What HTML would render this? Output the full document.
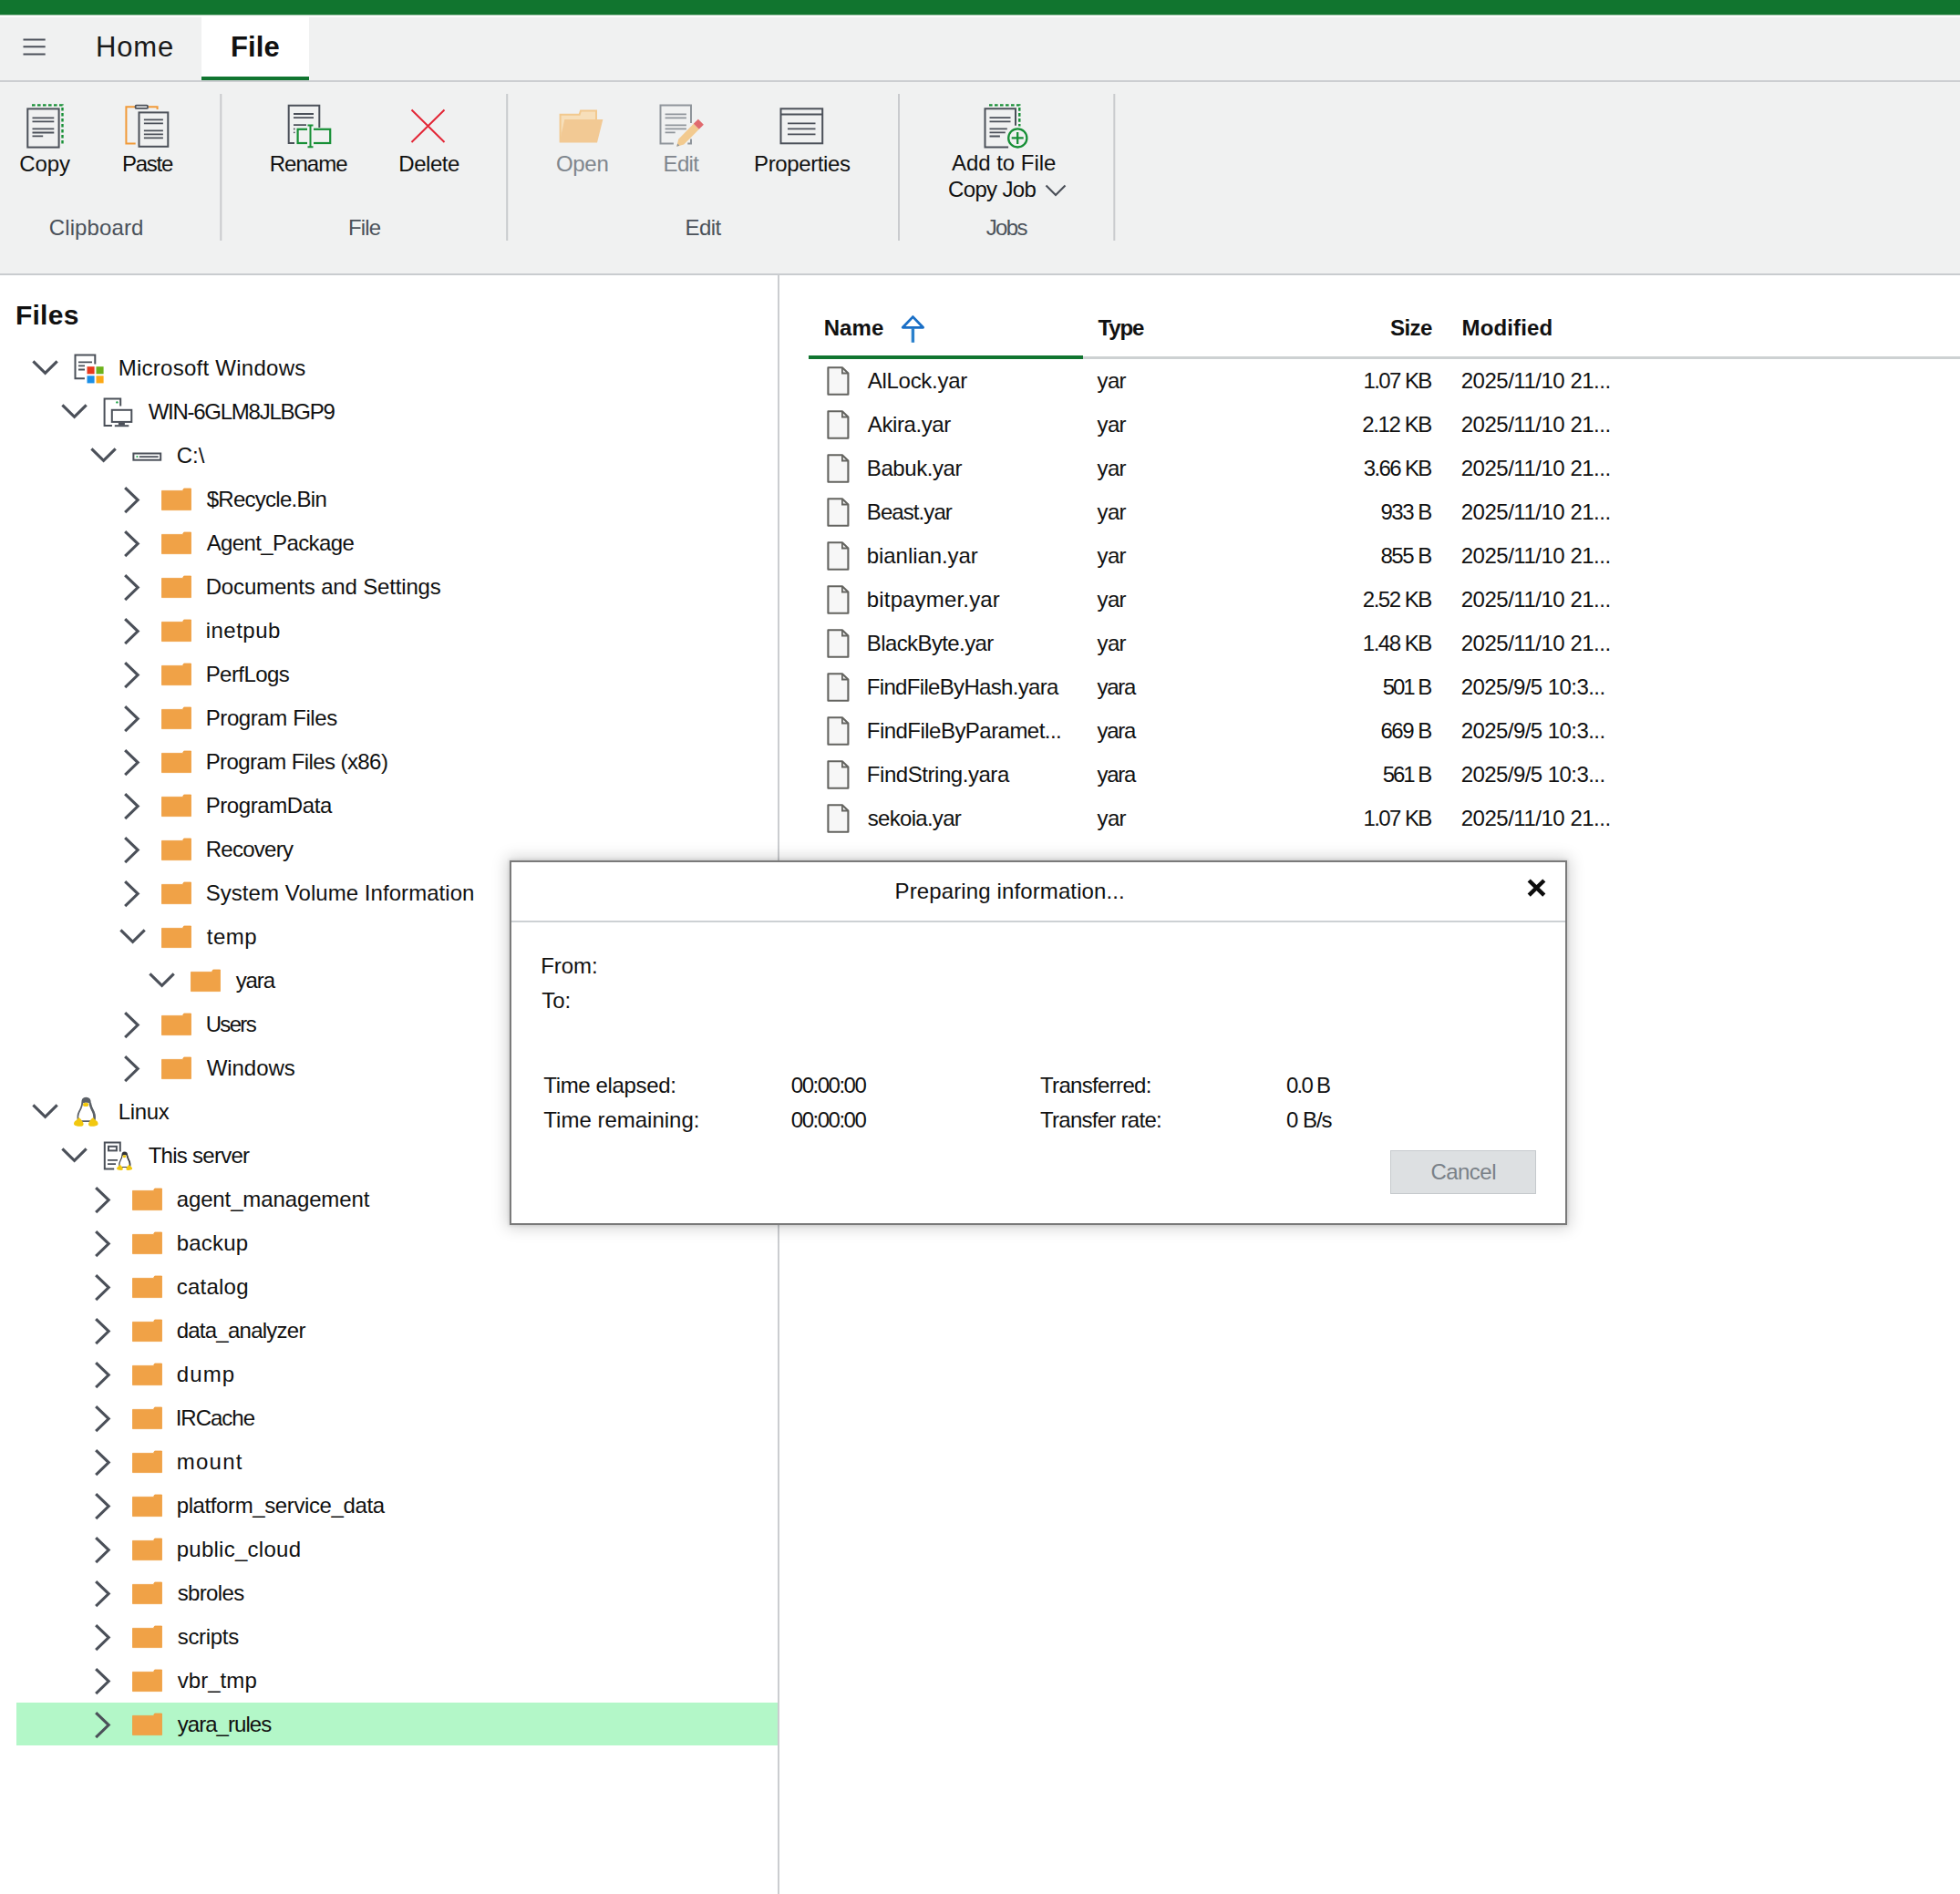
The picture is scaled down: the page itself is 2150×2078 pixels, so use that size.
<!DOCTYPE html>
<html><head><meta charset="utf-8"><style>
html,body{margin:0;padding:0;}
body{width:2150px;height:2078px;position:relative;overflow:hidden;background:#fff;font-family:"Liberation Sans", sans-serif;}
.r{position:absolute;}
.t{position:absolute;white-space:nowrap;}
svg{position:absolute;left:0;top:0;}
</style></head><body>
<div class="r" style="left:0;top:0;width:2150px;height:16px;background:#11752f"></div>
<div class="r" style="left:0;top:16px;width:2150px;height:1px;background:#9cc4a6"></div>
<div class="r" style="left:0;top:17px;width:2150px;height:1.5px;background:#fdfcfd"></div>
<div class="r" style="left:0;top:18.5px;width:2150px;height:69.5px;background:#f0f1f1"></div>
<div class="r" style="left:221px;top:17px;width:118px;height:67px;background:#fff"></div>
<div class="r" style="left:221px;top:84px;width:118px;height:4px;background:#117530"></div>
<div class="r" style="left:0;top:88px;width:2150px;height:2px;background:#ccced1"></div>
<div class="r" style="left:0;top:90px;width:2150px;height:210px;background:#f0f1f1"></div>
<div class="r" style="left:0;top:300px;width:2150px;height:2px;background:#c9cccf"></div>
<div class="r" style="left:853px;top:302px;width:2px;height:1776px;background:#cbcdd0"></div>
<div class="r" style="left:18px;top:1868px;width:835px;height:47px;background:#b3f7c8"></div>
<div class="r" style="left:887px;top:390.5px;width:1263px;height:3.5px;background:#cdd1d2"></div>
<div class="r" style="left:887px;top:390px;width:301px;height:4px;background:#117530"></div>
<svg width="2150" height="2078" viewBox="0 0 2150 2078">
<rect x="30.3" y="119.4" width="34.3" height="42.2" fill="none" stroke="#4b5059" stroke-width="2"/><path d="M35 115.4 H68.5 V159" fill="none" stroke="#178f36" stroke-width="2.4" stroke-dasharray="3.6 2.4"/><path d="M35.5 129.3 H59.3 M35.5 133.4 H59.3 M35.5 141.4 H59.3 M35.5 145.5 H59.3 M35.5 149.4 H47.2" stroke="#4b5059" stroke-width="1.8"/><path d="M148.7 117.3 H138.4 V157.4 H148.7" fill="none" stroke="#f19a38" stroke-width="2"/><path d="M162.6 117.3 H172.6 V120" fill="none" stroke="#f19a38" stroke-width="2"/><rect x="148.6" y="115.7" width="13.4" height="3.2" rx="1" fill="none" stroke="#4b5059" stroke-width="1.8"/><rect x="152.5" y="123.4" width="31.8" height="37.4" fill="none" stroke="#4b5059" stroke-width="2"/><path d="M157.9 131.3 H178.9 M157.9 135.4 H178.9 M157.9 143.3 H178.9 M157.9 147.4 H178.9 M157.9 151.4 H178.9" stroke="#4b5059" stroke-width="1.8"/><path d="M323 157 H316.7 V115.7 H350.3 V140" fill="none" stroke="#4b5059" stroke-width="2"/><path d="M322 125 H344 M322 129.2 H344 M322 137.2 H336" stroke="#4b5059" stroke-width="1.8"/><circle cx="322.8" cy="141.5" r="0.9" fill="#4b5059"/><circle cx="322.8" cy="145.3" r="0.9" fill="#4b5059"/><rect x="326.6" y="141.8" width="35.6" height="15.2" fill="#f0f1f1" stroke="#178f36" stroke-width="2.2"/><rect x="337" y="139" width="7" height="20" fill="#f0f1f1"/><path d="M340.5 137.5 V161.5 M337.5 137.5 H343.5 M337.5 161.2 H343.5" stroke="#178f36" stroke-width="2"/><path d="M451.5 120.5 L487.5 156 M487.5 120.5 L451.5 156" stroke="#e32636" stroke-width="2"/><path d="M614.6 155.5 V125.8 H635.6 L637 121.5 H654 V131" fill="#f7dfba" stroke="#f2c98f" stroke-width="2"/><path d="M613.6 156.5 L619.3 130.9 H661.4 L655 156.5 Z" fill="#f2c994"/><path d="M738.9 157.5 H724.5 V115.5 H758 V135.1 M758 152.6 V157.5 H754.3" fill="none" stroke="#8f959b" stroke-width="2"/><path d="M729.6 125.3 H752.9 M729.6 129.4 H752.9 M729.6 137.3 H752.9 M729.6 141.4 H752.9 M729.6 145.3 H740.7" stroke="#8f959b" stroke-width="1.8"/><path d="M742.3 160.7 L744.2 152.7 L760.8 135.8 L766.8 141.8 L750.2 158.6 Z" fill="#f2ca8f"/><path d="M760.8 135.8 L765.9 130.7 L771.9 136.7 L766.8 141.8 Z" fill="#e06a6e"/><path d="M742.3 160.7 L743.2 157.6 L745.4 159.8 Z" fill="#8f959b"/><rect x="856.5" y="119.3" width="45.7" height="38" fill="none" stroke="#4b5059" stroke-width="2"/><path d="M856.5 125.5 H902.2" stroke="#4b5059" stroke-width="1.9"/><path d="M864 135.4 H894.5 M864 141.3 H894.5 M864 147.3 H894.5" stroke="#4b5059" stroke-width="1.8"/><path d="M1106.1 161.4 H1080.5 V119.2 H1114 V137.8" fill="none" stroke="#4b5059" stroke-width="2"/><path d="M1085 115.4 H1118.3 V138.5" fill="none" stroke="#178f36" stroke-width="2.4" stroke-dasharray="3.6 2.4"/><path d="M1085.5 129.2 H1108.5 M1085.5 133.3 H1108.5 M1085.5 141.3 H1104.8 M1085.5 145.4 H1102.8 M1085.5 149.5 H1096.9" stroke="#4b5059" stroke-width="1.8"/><circle cx="1116.3" cy="151.4" r="10.1" fill="#f0f1f1" stroke="#178f36" stroke-width="2.3"/><path d="M1116.2 145 V158 M1109.7 151.4 H1122.7" stroke="#178f36" stroke-width="2.3"/><polyline points="1147.5,203.5 1158,214 1168.5,203.5" fill="none" stroke="#4b5059" stroke-width="2.2"/><path d="M25.5 43.4 H49.7 M25.5 51.3 H49.7 M25.5 59.4 H49.7" stroke="#4b505a" stroke-width="2"/><rect x="241.3" y="103" width="2" height="161" fill="#c9cbce"/><rect x="555.2" y="103" width="2" height="161" fill="#c9cbce"/><rect x="985" y="103" width="2" height="161" fill="#c9cbce"/><rect x="1221.3" y="103" width="2" height="161" fill="#c9cbce"/><path d="M1001.4 347.6 L990.2 359.3 H1012.6 Z" fill="none" stroke="#1a6fc6" stroke-width="2.8" stroke-linejoin="round"/><path d="M1001.4 360 V375.8" stroke="#2a80cc" stroke-width="3.4"/>
<polyline points="36.4,396.4 49.6,409.4 62.7,396.4" fill="none" stroke="#4b5059" stroke-width="3.1"/><g transform="translate(0,0.0)"><path d="M92.9 415.2 H82.5 V389.4 H104.3 V399.6" fill="none" stroke="#4b5059" stroke-width="2"/><path d="M86 397.4 H101 M86 401.4 H93 M86 405.5 H93" stroke="#4b5059" stroke-width="1.8"/><rect x="95.5" y="402.2" width="8.1" height="8.1" fill="#e8391d"/><rect x="105.5" y="402.2" width="8.1" height="8.1" fill="#6db21b"/><rect x="95.5" y="412.3" width="8.1" height="8.1" fill="#1b8fe7"/><rect x="105.5" y="412.3" width="8.1" height="8.1" fill="#fca815"/></g><polyline points="68.4,444.4 81.6,457.4 94.7,444.4" fill="none" stroke="#4b5059" stroke-width="3.1"/><g transform="translate(0,0.0)"><path d="M122.9 467 H114.6 V437.6 H132.2 V445.4" fill="none" stroke="#4b5059" stroke-width="2"/><circle cx="128.4" cy="441.4" r="1.2" fill="#1ea446"/><rect x="122.8" y="449.8" width="21.5" height="13.1" fill="none" stroke="#4b5059" stroke-width="2"/><rect x="129.9" y="463.5" width="7" height="3" fill="#4b5059"/><path d="M125.8 467.2 H141.3" stroke="#4b5059" stroke-width="2"/></g><polyline points="100.4,492.4 113.6,505.4 126.7,492.4" fill="none" stroke="#4b5059" stroke-width="3.1"/><g transform="translate(0,0.0)"><rect x="146.4" y="497.5" width="29.8" height="7.2" fill="none" stroke="#4b5059" stroke-width="2"/><circle cx="150.4" cy="501.1" r="1" fill="#1ea446"/><path d="M153.5 501.1 H173" stroke="#4b5059" stroke-width="1.8" stroke-linecap="round"/></g><polyline points="137.2,535.1 151.2,548.6 137.2,562.1" fill="none" stroke="#4b5059" stroke-width="3.1"/><path d="M177.5 538.4 H200.3 L201.7 536.0 H209.5 V559.6 H177.5 Z" fill="#f0a247" stroke="#ef9d3e" stroke-width="0.8"/><polyline points="137.2,583.1 151.2,596.6 137.2,610.1" fill="none" stroke="#4b5059" stroke-width="3.1"/><path d="M177.5 586.4 H200.3 L201.7 584.0 H209.5 V607.6 H177.5 Z" fill="#f0a247" stroke="#ef9d3e" stroke-width="0.8"/><polyline points="137.2,631.1 151.2,644.6 137.2,658.1" fill="none" stroke="#4b5059" stroke-width="3.1"/><path d="M177.5 634.4 H200.3 L201.7 632.0 H209.5 V655.6 H177.5 Z" fill="#f0a247" stroke="#ef9d3e" stroke-width="0.8"/><polyline points="137.2,679.1 151.2,692.6 137.2,706.1" fill="none" stroke="#4b5059" stroke-width="3.1"/><path d="M177.5 682.4 H200.3 L201.7 680.0 H209.5 V703.6 H177.5 Z" fill="#f0a247" stroke="#ef9d3e" stroke-width="0.8"/><polyline points="137.2,727.1 151.2,740.6 137.2,754.1" fill="none" stroke="#4b5059" stroke-width="3.1"/><path d="M177.5 730.4 H200.3 L201.7 728.0 H209.5 V751.6 H177.5 Z" fill="#f0a247" stroke="#ef9d3e" stroke-width="0.8"/><polyline points="137.2,775.1 151.2,788.6 137.2,802.1" fill="none" stroke="#4b5059" stroke-width="3.1"/><path d="M177.5 778.4 H200.3 L201.7 776.0 H209.5 V799.6 H177.5 Z" fill="#f0a247" stroke="#ef9d3e" stroke-width="0.8"/><polyline points="137.2,823.1 151.2,836.6 137.2,850.1" fill="none" stroke="#4b5059" stroke-width="3.1"/><path d="M177.5 826.4 H200.3 L201.7 824.0 H209.5 V847.6 H177.5 Z" fill="#f0a247" stroke="#ef9d3e" stroke-width="0.8"/><polyline points="137.2,871.1 151.2,884.6 137.2,898.1" fill="none" stroke="#4b5059" stroke-width="3.1"/><path d="M177.5 874.4 H200.3 L201.7 872.0 H209.5 V895.6 H177.5 Z" fill="#f0a247" stroke="#ef9d3e" stroke-width="0.8"/><polyline points="137.2,919.1 151.2,932.6 137.2,946.1" fill="none" stroke="#4b5059" stroke-width="3.1"/><path d="M177.5 922.4 H200.3 L201.7 920.0 H209.5 V943.6 H177.5 Z" fill="#f0a247" stroke="#ef9d3e" stroke-width="0.8"/><polyline points="137.2,967.1 151.2,980.6 137.2,994.1" fill="none" stroke="#4b5059" stroke-width="3.1"/><path d="M177.5 970.4 H200.3 L201.7 968.0 H209.5 V991.6 H177.5 Z" fill="#f0a247" stroke="#ef9d3e" stroke-width="0.8"/><polyline points="132.4,1020.4 145.6,1033.4 158.7,1020.4" fill="none" stroke="#4b5059" stroke-width="3.1"/><path d="M177.5 1018.4 H200.3 L201.7 1016.0 H209.5 V1039.6 H177.5 Z" fill="#f0a247" stroke="#ef9d3e" stroke-width="0.8"/><polyline points="164.4,1068.4 177.6,1081.4 190.7,1068.4" fill="none" stroke="#4b5059" stroke-width="3.1"/><path d="M209.5 1066.4 H232.3 L233.7 1064.0 H241.5 V1087.6 H209.5 Z" fill="#f0a247" stroke="#ef9d3e" stroke-width="0.8"/><polyline points="137.2,1111.1 151.2,1124.6 137.2,1138.1" fill="none" stroke="#4b5059" stroke-width="3.1"/><path d="M177.5 1114.4 H200.3 L201.7 1112.0 H209.5 V1135.6 H177.5 Z" fill="#f0a247" stroke="#ef9d3e" stroke-width="0.8"/><polyline points="137.2,1159.1 151.2,1172.6 137.2,1186.1" fill="none" stroke="#4b5059" stroke-width="3.1"/><path d="M177.5 1162.4 H200.3 L201.7 1160.0 H209.5 V1183.6 H177.5 Z" fill="#f0a247" stroke="#ef9d3e" stroke-width="0.8"/><polyline points="36.4,1212.4 49.6,1225.4 62.7,1212.4" fill="none" stroke="#4b5059" stroke-width="3.1"/><g transform="translate(80.7,1203.7) scale(1.0)"><path d="M13.6 0.9 C10.6 0.9 9.5 3.2 9.5 6.2 C9.5 9.2 8.2 12.2 6.2 16 C4.6 19 4.2 22 5.2 26.5 L22.4 26.5 C23.4 22 23 19 21.6 16 C19.6 12.2 18.2 9.2 18.2 6.2 C18.2 3.2 16.6 0.9 13.6 0.9 Z" fill="#fff" stroke="#5b6067" stroke-width="1.8"/><path d="M18.2 6.5 C18.2 9.5 19.8 12.5 21.6 16 C23 19 23.4 22 22.4 26.5" fill="none" stroke="#5b6067" stroke-width="2.6"/><path d="M9.5 7 C9.5 2.8 11 0.9 13.6 0.9 C16.2 0.9 18.2 2.8 18.2 7 C16.4 5.6 11.4 5.6 9.5 7 Z" fill="#5b6067"/><ellipse cx="13.4" cy="8.2" rx="3.1" ry="2.2" fill="#f2c80f"/><path d="M5.6 22.4 C7.6 23.6 10.4 26.8 10.9 29.2 C11.2 31.2 9.4 32 7 32 C4 32 1.4 31.4 0.6 30.2 C0 29.2 0.4 27.4 1.6 26.4 C3 25.2 4.8 24.4 5.6 22.4 Z" fill="#f2c80f"/><path d="M21.6 22.4 C19.6 23.6 16.8 26.8 16.3 29.2 C16 31.2 17.8 32 20.2 32 C23.2 32 25.8 31.4 26.6 30.2 C27.2 29.2 26.8 27.4 25.6 26.4 C24.2 25.2 22.4 24.4 21.6 22.4 Z" fill="#f2c80f"/></g><polyline points="68.4,1260.4 81.6,1273.4 94.7,1260.4" fill="none" stroke="#4b5059" stroke-width="3.1"/><g transform="translate(0,0.0)"><path d="M125.2 1282.4 H114.8 V1253.5 H131.8 V1263.6" fill="none" stroke="#4b5059" stroke-width="2"/><rect x="119" y="1257.8" width="8.9" height="4.6" fill="none" stroke="#4b5059" stroke-width="2"/><path d="M118 1272.9 H129 M118 1277.1 H127" stroke="#4b5059" stroke-width="1.8"/><g transform="translate(127.9,1263.5) scale(0.64)"><path d="M13.6 0.9 C10.6 0.9 9.5 3.2 9.5 6.2 C9.5 9.2 8.2 12.2 6.2 16 C4.6 19 4.2 22 5.2 26.5 L22.4 26.5 C23.4 22 23 19 21.6 16 C19.6 12.2 18.2 9.2 18.2 6.2 C18.2 3.2 16.6 0.9 13.6 0.9 Z" fill="#fff" stroke="#3a3d42" stroke-width="1.8"/><path d="M18.2 6.5 C18.2 9.5 19.8 12.5 21.6 16 C23 19 23.4 22 22.4 26.5" fill="none" stroke="#3a3d42" stroke-width="2.6"/><path d="M9.5 7 C9.5 2.8 11 0.9 13.6 0.9 C16.2 0.9 18.2 2.8 18.2 7 C16.4 5.6 11.4 5.6 9.5 7 Z" fill="#2e3136"/><ellipse cx="13.4" cy="8.2" rx="3.1" ry="2.2" fill="#f2c80f"/><path d="M5.6 22.4 C7.6 23.6 10.4 26.8 10.9 29.2 C11.2 31.2 9.4 32 7 32 C4 32 1.4 31.4 0.6 30.2 C0 29.2 0.4 27.4 1.6 26.4 C3 25.2 4.8 24.4 5.6 22.4 Z" fill="#f2c80f"/><path d="M21.6 22.4 C19.6 23.6 16.8 26.8 16.3 29.2 C16 31.2 17.8 32 20.2 32 C23.2 32 25.8 31.4 26.6 30.2 C27.2 29.2 26.8 27.4 25.6 26.4 C24.2 25.2 22.4 24.4 21.6 22.4 Z" fill="#f2c80f"/></g></g><polyline points="105.2,1303.1 119.2,1316.6 105.2,1330.1" fill="none" stroke="#4b5059" stroke-width="3.1"/><path d="M145.5 1306.4 H168.3 L169.7 1304.0 H177.5 V1327.6 H145.5 Z" fill="#f0a247" stroke="#ef9d3e" stroke-width="0.8"/><polyline points="105.2,1351.1 119.2,1364.6 105.2,1378.1" fill="none" stroke="#4b5059" stroke-width="3.1"/><path d="M145.5 1354.4 H168.3 L169.7 1352.0 H177.5 V1375.6 H145.5 Z" fill="#f0a247" stroke="#ef9d3e" stroke-width="0.8"/><polyline points="105.2,1399.1 119.2,1412.6 105.2,1426.1" fill="none" stroke="#4b5059" stroke-width="3.1"/><path d="M145.5 1402.4 H168.3 L169.7 1400.0 H177.5 V1423.6 H145.5 Z" fill="#f0a247" stroke="#ef9d3e" stroke-width="0.8"/><polyline points="105.2,1447.1 119.2,1460.6 105.2,1474.1" fill="none" stroke="#4b5059" stroke-width="3.1"/><path d="M145.5 1450.4 H168.3 L169.7 1448.0 H177.5 V1471.6 H145.5 Z" fill="#f0a247" stroke="#ef9d3e" stroke-width="0.8"/><polyline points="105.2,1495.1 119.2,1508.6 105.2,1522.1" fill="none" stroke="#4b5059" stroke-width="3.1"/><path d="M145.5 1498.4 H168.3 L169.7 1496.0 H177.5 V1519.6 H145.5 Z" fill="#f0a247" stroke="#ef9d3e" stroke-width="0.8"/><polyline points="105.2,1543.1 119.2,1556.6 105.2,1570.1" fill="none" stroke="#4b5059" stroke-width="3.1"/><path d="M145.5 1546.4 H168.3 L169.7 1544.0 H177.5 V1567.6 H145.5 Z" fill="#f0a247" stroke="#ef9d3e" stroke-width="0.8"/><polyline points="105.2,1591.1 119.2,1604.6 105.2,1618.1" fill="none" stroke="#4b5059" stroke-width="3.1"/><path d="M145.5 1594.4 H168.3 L169.7 1592.0 H177.5 V1615.6 H145.5 Z" fill="#f0a247" stroke="#ef9d3e" stroke-width="0.8"/><polyline points="105.2,1639.1 119.2,1652.6 105.2,1666.1" fill="none" stroke="#4b5059" stroke-width="3.1"/><path d="M145.5 1642.4 H168.3 L169.7 1640.0 H177.5 V1663.6 H145.5 Z" fill="#f0a247" stroke="#ef9d3e" stroke-width="0.8"/><polyline points="105.2,1687.1 119.2,1700.6 105.2,1714.1" fill="none" stroke="#4b5059" stroke-width="3.1"/><path d="M145.5 1690.4 H168.3 L169.7 1688.0 H177.5 V1711.6 H145.5 Z" fill="#f0a247" stroke="#ef9d3e" stroke-width="0.8"/><polyline points="105.2,1735.1 119.2,1748.6 105.2,1762.1" fill="none" stroke="#4b5059" stroke-width="3.1"/><path d="M145.5 1738.4 H168.3 L169.7 1736.0 H177.5 V1759.6 H145.5 Z" fill="#f0a247" stroke="#ef9d3e" stroke-width="0.8"/><polyline points="105.2,1783.1 119.2,1796.6 105.2,1810.1" fill="none" stroke="#4b5059" stroke-width="3.1"/><path d="M145.5 1786.4 H168.3 L169.7 1784.0 H177.5 V1807.6 H145.5 Z" fill="#f0a247" stroke="#ef9d3e" stroke-width="0.8"/><polyline points="105.2,1831.1 119.2,1844.6 105.2,1858.1" fill="none" stroke="#4b5059" stroke-width="3.1"/><path d="M145.5 1834.4 H168.3 L169.7 1832.0 H177.5 V1855.6 H145.5 Z" fill="#f0a247" stroke="#ef9d3e" stroke-width="0.8"/><polyline points="105.2,1879.1 119.2,1892.6 105.2,1906.1" fill="none" stroke="#4b5059" stroke-width="3.1"/><path d="M145.5 1882.4 H168.3 L169.7 1880.0 H177.5 V1903.6 H145.5 Z" fill="#f0a247" stroke="#ef9d3e" stroke-width="0.8"/><path d="M908.4 403.3 H923.9 L930.4 409.6 V432.8 H908.4 Z" fill="#f7f7f7" stroke="#646460" stroke-width="2.1" stroke-linejoin="round"/><path d="M923.9 403.6 V409.5 H930.1" fill="none" stroke="#646460" stroke-width="1.8"/><path d="M908.4 451.3 H923.9 L930.4 457.6 V480.8 H908.4 Z" fill="#f7f7f7" stroke="#646460" stroke-width="2.1" stroke-linejoin="round"/><path d="M923.9 451.6 V457.5 H930.1" fill="none" stroke="#646460" stroke-width="1.8"/><path d="M908.4 499.3 H923.9 L930.4 505.6 V528.8 H908.4 Z" fill="#f7f7f7" stroke="#646460" stroke-width="2.1" stroke-linejoin="round"/><path d="M923.9 499.6 V505.5 H930.1" fill="none" stroke="#646460" stroke-width="1.8"/><path d="M908.4 547.3 H923.9 L930.4 553.6 V576.8 H908.4 Z" fill="#f7f7f7" stroke="#646460" stroke-width="2.1" stroke-linejoin="round"/><path d="M923.9 547.6 V553.5 H930.1" fill="none" stroke="#646460" stroke-width="1.8"/><path d="M908.4 595.3 H923.9 L930.4 601.6 V624.8 H908.4 Z" fill="#f7f7f7" stroke="#646460" stroke-width="2.1" stroke-linejoin="round"/><path d="M923.9 595.6 V601.5 H930.1" fill="none" stroke="#646460" stroke-width="1.8"/><path d="M908.4 643.3 H923.9 L930.4 649.6 V672.8 H908.4 Z" fill="#f7f7f7" stroke="#646460" stroke-width="2.1" stroke-linejoin="round"/><path d="M923.9 643.6 V649.5 H930.1" fill="none" stroke="#646460" stroke-width="1.8"/><path d="M908.4 691.3 H923.9 L930.4 697.6 V720.8 H908.4 Z" fill="#f7f7f7" stroke="#646460" stroke-width="2.1" stroke-linejoin="round"/><path d="M923.9 691.6 V697.5 H930.1" fill="none" stroke="#646460" stroke-width="1.8"/><path d="M908.4 739.3 H923.9 L930.4 745.6 V768.8 H908.4 Z" fill="#f7f7f7" stroke="#646460" stroke-width="2.1" stroke-linejoin="round"/><path d="M923.9 739.6 V745.5 H930.1" fill="none" stroke="#646460" stroke-width="1.8"/><path d="M908.4 787.3 H923.9 L930.4 793.6 V816.8 H908.4 Z" fill="#f7f7f7" stroke="#646460" stroke-width="2.1" stroke-linejoin="round"/><path d="M923.9 787.6 V793.5 H930.1" fill="none" stroke="#646460" stroke-width="1.8"/><path d="M908.4 835.3 H923.9 L930.4 841.6 V864.8 H908.4 Z" fill="#f7f7f7" stroke="#646460" stroke-width="2.1" stroke-linejoin="round"/><path d="M923.9 835.6 V841.5 H930.1" fill="none" stroke="#646460" stroke-width="1.8"/><path d="M908.4 883.3 H923.9 L930.4 889.6 V912.8 H908.4 Z" fill="#f7f7f7" stroke="#646460" stroke-width="2.1" stroke-linejoin="round"/><path d="M923.9 883.6 V889.5 H930.1" fill="none" stroke="#646460" stroke-width="1.8"/>
</svg>

<div class="t" style="left:105.00px;top:35.96px;font-size:31px;line-height:31px;color:#1a1a1a;letter-spacing:0.850px;">Home</div>
<div class="t" style="left:253.00px;top:35.96px;font-size:31px;line-height:31px;color:#111;font-weight:700;letter-spacing:0.146px;">File</div>
<div class="t" style="left:21.30px;top:167.68px;font-size:24px;line-height:24px;color:#111;letter-spacing:-0.109px;">Copy</div>
<div class="t" style="left:134.00px;top:167.68px;font-size:24px;line-height:24px;color:#111;letter-spacing:-1.256px;">Paste</div>
<div class="t" style="left:295.70px;top:167.68px;font-size:24px;line-height:24px;color:#111;letter-spacing:-0.953px;">Rename</div>
<div class="t" style="left:437.30px;top:167.68px;font-size:24px;line-height:24px;color:#111;letter-spacing:-0.465px;">Delete</div>
<div class="t" style="left:610.00px;top:167.68px;font-size:24px;line-height:24px;color:#7f868d;letter-spacing:-0.321px;">Open</div>
<div class="t" style="left:727.50px;top:167.68px;font-size:24px;line-height:24px;color:#7f868d;letter-spacing:-0.629px;">Edit</div>
<div class="t" style="left:827.00px;top:167.68px;font-size:24px;line-height:24px;color:#111;letter-spacing:-0.376px;">Properties</div>
<div class="t" style="left:1044.00px;top:167.28px;font-size:24px;line-height:24px;color:#111;letter-spacing:-0.038px;">Add to File</div>
<div class="t" style="left:1040.00px;top:196.18px;font-size:24px;line-height:24px;color:#111;letter-spacing:-0.649px;">Copy Job</div>
<div class="t" style="left:53.80px;top:237.88px;font-size:24px;line-height:24px;color:#4b525a;letter-spacing:0.103px;">Clipboard</div>
<div class="t" style="left:382.00px;top:237.88px;font-size:24px;line-height:24px;color:#4b525a;letter-spacing:-0.875px;">File</div>
<div class="t" style="left:751.60px;top:237.88px;font-size:24px;line-height:24px;color:#4b525a;letter-spacing:-0.596px;">Edit</div>
<div class="t" style="left:1081.70px;top:237.88px;font-size:24px;line-height:24px;color:#4b525a;letter-spacing:-1.598px;">Jobs</div>
<div class="t" style="left:16.90px;top:330.71px;font-size:30px;line-height:30px;color:#111;font-weight:700;letter-spacing:0.280px;">Files</div>
<div class="t" style="left:129.70px;top:392.18px;font-size:24px;line-height:24px;color:#111;letter-spacing:0.264px;">Microsoft Windows</div>
<div class="t" style="left:162.70px;top:440.18px;font-size:24px;line-height:24px;color:#111;letter-spacing:-1.263px;">WIN-6GLM8JLBGP9</div>
<div class="t" style="left:193.70px;top:488.18px;font-size:24px;line-height:24px;color:#111;">C:\</div>
<div class="t" style="left:226.70px;top:536.18px;font-size:24px;line-height:24px;color:#111;letter-spacing:-0.729px;">$Recycle.Bin</div>
<div class="t" style="left:226.70px;top:584.18px;font-size:24px;line-height:24px;color:#111;letter-spacing:-0.618px;">Agent_Package</div>
<div class="t" style="left:225.70px;top:632.18px;font-size:24px;line-height:24px;color:#111;letter-spacing:-0.161px;">Documents and Settings</div>
<div class="t" style="left:225.70px;top:680.18px;font-size:24px;line-height:24px;color:#111;letter-spacing:0.485px;">inetpub</div>
<div class="t" style="left:225.70px;top:728.18px;font-size:24px;line-height:24px;color:#111;letter-spacing:-0.580px;">PerfLogs</div>
<div class="t" style="left:225.70px;top:776.18px;font-size:24px;line-height:24px;color:#111;letter-spacing:-0.406px;">Program Files</div>
<div class="t" style="left:225.70px;top:824.18px;font-size:24px;line-height:24px;color:#111;letter-spacing:-0.585px;">Program Files (x86)</div>
<div class="t" style="left:225.70px;top:872.18px;font-size:24px;line-height:24px;color:#111;letter-spacing:-0.418px;">ProgramData</div>
<div class="t" style="left:225.70px;top:920.18px;font-size:24px;line-height:24px;color:#111;letter-spacing:-0.724px;">Recovery</div>
<div class="t" style="left:225.70px;top:968.18px;font-size:24px;line-height:24px;color:#111;letter-spacing:0.054px;">System Volume Information</div>
<div class="t" style="left:226.70px;top:1016.18px;font-size:24px;line-height:24px;color:#111;letter-spacing:0.531px;">temp</div>
<div class="t" style="left:258.70px;top:1064.18px;font-size:24px;line-height:24px;color:#111;letter-spacing:-1.113px;">yara</div>
<div class="t" style="left:225.70px;top:1112.18px;font-size:24px;line-height:24px;color:#111;letter-spacing:-1.668px;">Users</div>
<div class="t" style="left:226.70px;top:1160.18px;font-size:24px;line-height:24px;color:#111;letter-spacing:-0.060px;">Windows</div>
<div class="t" style="left:129.70px;top:1208.18px;font-size:24px;line-height:24px;color:#111;letter-spacing:-0.344px;">Linux</div>
<div class="t" style="left:162.70px;top:1256.18px;font-size:24px;line-height:24px;color:#111;letter-spacing:-0.730px;">This server</div>
<div class="t" style="left:193.70px;top:1304.18px;font-size:24px;line-height:24px;color:#111;letter-spacing:-0.122px;">agent_management</div>
<div class="t" style="left:193.70px;top:1352.18px;font-size:24px;line-height:24px;color:#111;letter-spacing:0.191px;">backup</div>
<div class="t" style="left:193.70px;top:1400.18px;font-size:24px;line-height:24px;color:#111;letter-spacing:0.243px;">catalog</div>
<div class="t" style="left:193.70px;top:1448.18px;font-size:24px;line-height:24px;color:#111;letter-spacing:-0.757px;">data_analyzer</div>
<div class="t" style="left:193.70px;top:1496.18px;font-size:24px;line-height:24px;color:#111;letter-spacing:1.138px;">dump</div>
<div class="t" style="left:192.70px;top:1544.18px;font-size:24px;line-height:24px;color:#111;letter-spacing:-1.005px;">IRCache</div>
<div class="t" style="left:193.70px;top:1592.18px;font-size:24px;line-height:24px;color:#111;letter-spacing:1.266px;">mount</div>
<div class="t" style="left:193.70px;top:1640.18px;font-size:24px;line-height:24px;color:#111;letter-spacing:-0.389px;">platform_service_data</div>
<div class="t" style="left:193.70px;top:1688.18px;font-size:24px;line-height:24px;color:#111;letter-spacing:0.265px;">public_cloud</div>
<div class="t" style="left:194.70px;top:1736.18px;font-size:24px;line-height:24px;color:#111;letter-spacing:-0.645px;">sbroles</div>
<div class="t" style="left:194.70px;top:1784.18px;font-size:24px;line-height:24px;color:#111;letter-spacing:-0.307px;">scripts</div>
<div class="t" style="left:194.70px;top:1832.18px;font-size:24px;line-height:24px;color:#111;letter-spacing:0.059px;">vbr_tmp</div>
<div class="t" style="left:194.70px;top:1880.18px;font-size:24px;line-height:24px;color:#111;letter-spacing:-0.951px;">yara_rules</div>
<div class="t" style="left:903.70px;top:348.08px;font-size:24px;line-height:24px;color:#111;font-weight:700;letter-spacing:0.093px;">Name</div>
<div class="t" style="left:1204.50px;top:348.08px;font-size:24px;line-height:24px;color:#111;font-weight:700;letter-spacing:-1.129px;">Type</div>
<div class="t" style="left:1525.00px;top:348.08px;font-size:24px;line-height:24px;color:#111;font-weight:700;letter-spacing:-0.559px;">Size</div>
<div class="t" style="left:1603.50px;top:348.08px;font-size:24px;line-height:24px;color:#111;font-weight:700;letter-spacing:0.145px;">Modified</div>
<div class="t" style="left:951.80px;top:405.88px;font-size:24px;line-height:24px;color:#111;letter-spacing:-0.295px;">AlLock.yar</div>
<div class="t" style="left:1203.60px;top:405.88px;font-size:24px;line-height:24px;color:#111;letter-spacing:-0.674px;">yar</div>
<div class="t" style="left:1495.50px;top:405.88px;font-size:24px;line-height:24px;color:#111;letter-spacing:-1.598px;">1.07 KB</div>
<div class="t" style="left:1602.70px;top:405.88px;font-size:24px;line-height:24px;color:#111;letter-spacing:-0.482px;">2025/11/10 21...</div>
<div class="t" style="left:951.80px;top:453.88px;font-size:24px;line-height:24px;color:#111;letter-spacing:-0.399px;">Akira.yar</div>
<div class="t" style="left:1203.60px;top:453.88px;font-size:24px;line-height:24px;color:#111;letter-spacing:-0.674px;">yar</div>
<div class="t" style="left:1494.30px;top:453.88px;font-size:24px;line-height:24px;color:#111;letter-spacing:-1.398px;">2.12 KB</div>
<div class="t" style="left:1602.70px;top:453.88px;font-size:24px;line-height:24px;color:#111;letter-spacing:-0.482px;">2025/11/10 21...</div>
<div class="t" style="left:950.80px;top:501.88px;font-size:24px;line-height:24px;color:#111;letter-spacing:-0.421px;">Babuk.yar</div>
<div class="t" style="left:1203.60px;top:501.88px;font-size:24px;line-height:24px;color:#111;letter-spacing:-0.674px;">yar</div>
<div class="t" style="left:1495.80px;top:501.88px;font-size:24px;line-height:24px;color:#111;letter-spacing:-1.648px;">3.66 KB</div>
<div class="t" style="left:1602.70px;top:501.88px;font-size:24px;line-height:24px;color:#111;letter-spacing:-0.482px;">2025/11/10 21...</div>
<div class="t" style="left:950.80px;top:549.88px;font-size:24px;line-height:24px;color:#111;letter-spacing:-0.923px;">Beast.yar</div>
<div class="t" style="left:1203.60px;top:549.88px;font-size:24px;line-height:24px;color:#111;letter-spacing:-0.674px;">yar</div>
<div class="t" style="left:1514.50px;top:549.88px;font-size:24px;line-height:24px;color:#111;letter-spacing:-1.478px;">933 B</div>
<div class="t" style="left:1602.70px;top:549.88px;font-size:24px;line-height:24px;color:#111;letter-spacing:-0.482px;">2025/11/10 21...</div>
<div class="t" style="left:950.80px;top:597.88px;font-size:24px;line-height:24px;color:#111;letter-spacing:-0.068px;">bianlian.yar</div>
<div class="t" style="left:1203.60px;top:597.88px;font-size:24px;line-height:24px;color:#111;letter-spacing:-0.674px;">yar</div>
<div class="t" style="left:1514.50px;top:597.88px;font-size:24px;line-height:24px;color:#111;letter-spacing:-1.478px;">855 B</div>
<div class="t" style="left:1602.70px;top:597.88px;font-size:24px;line-height:24px;color:#111;letter-spacing:-0.482px;">2025/11/10 21...</div>
<div class="t" style="left:950.80px;top:645.88px;font-size:24px;line-height:24px;color:#111;letter-spacing:0.161px;">bitpaymer.yar</div>
<div class="t" style="left:1203.60px;top:645.88px;font-size:24px;line-height:24px;color:#111;letter-spacing:-0.674px;">yar</div>
<div class="t" style="left:1494.80px;top:645.88px;font-size:24px;line-height:24px;color:#111;letter-spacing:-1.481px;">2.52 KB</div>
<div class="t" style="left:1602.70px;top:645.88px;font-size:24px;line-height:24px;color:#111;letter-spacing:-0.482px;">2025/11/10 21...</div>
<div class="t" style="left:950.80px;top:693.88px;font-size:24px;line-height:24px;color:#111;letter-spacing:-0.602px;">BlackByte.yar</div>
<div class="t" style="left:1203.60px;top:693.88px;font-size:24px;line-height:24px;color:#111;letter-spacing:-0.674px;">yar</div>
<div class="t" style="left:1494.80px;top:693.88px;font-size:24px;line-height:24px;color:#111;letter-spacing:-1.481px;">1.48 KB</div>
<div class="t" style="left:1602.70px;top:693.88px;font-size:24px;line-height:24px;color:#111;letter-spacing:-0.482px;">2025/11/10 21...</div>
<div class="t" style="left:950.80px;top:741.88px;font-size:24px;line-height:24px;color:#111;letter-spacing:-0.672px;">FindFileByHash.yara</div>
<div class="t" style="left:1203.60px;top:741.88px;font-size:24px;line-height:24px;color:#111;letter-spacing:-1.313px;">yara</div>
<div class="t" style="left:1516.70px;top:741.88px;font-size:24px;line-height:24px;color:#111;letter-spacing:-2.028px;">501 B</div>
<div class="t" style="left:1602.70px;top:741.88px;font-size:24px;line-height:24px;color:#111;letter-spacing:-0.562px;">2025/9/5 10:3...</div>
<div class="t" style="left:950.80px;top:789.88px;font-size:24px;line-height:24px;color:#111;letter-spacing:-0.532px;">FindFileByParamet...</div>
<div class="t" style="left:1203.60px;top:789.88px;font-size:24px;line-height:24px;color:#111;letter-spacing:-1.313px;">yara</div>
<div class="t" style="left:1514.50px;top:789.88px;font-size:24px;line-height:24px;color:#111;letter-spacing:-1.478px;">669 B</div>
<div class="t" style="left:1602.70px;top:789.88px;font-size:24px;line-height:24px;color:#111;letter-spacing:-0.562px;">2025/9/5 10:3...</div>
<div class="t" style="left:950.80px;top:837.88px;font-size:24px;line-height:24px;color:#111;letter-spacing:-0.449px;">FindString.yara</div>
<div class="t" style="left:1203.60px;top:837.88px;font-size:24px;line-height:24px;color:#111;letter-spacing:-1.313px;">yara</div>
<div class="t" style="left:1516.70px;top:837.88px;font-size:24px;line-height:24px;color:#111;letter-spacing:-2.028px;">561 B</div>
<div class="t" style="left:1602.70px;top:837.88px;font-size:24px;line-height:24px;color:#111;letter-spacing:-0.562px;">2025/9/5 10:3...</div>
<div class="t" style="left:951.80px;top:885.88px;font-size:24px;line-height:24px;color:#111;letter-spacing:-0.710px;">sekoia.yar</div>
<div class="t" style="left:1203.60px;top:885.88px;font-size:24px;line-height:24px;color:#111;letter-spacing:-0.674px;">yar</div>
<div class="t" style="left:1495.50px;top:885.88px;font-size:24px;line-height:24px;color:#111;letter-spacing:-1.598px;">1.07 KB</div>
<div class="t" style="left:1602.70px;top:885.88px;font-size:24px;line-height:24px;color:#111;letter-spacing:-0.482px;">2025/11/10 21...</div>
<div class="r" style="left:559px;top:944px;width:1156px;height:396px;border:2px solid #7a7a7a;background:#fff;box-shadow:0 0 3px 1px rgba(0,0,0,0.10),0 0 16px 3px rgba(0,0,0,0.18)"></div>
<div class="r" style="left:561px;top:1010px;width:1156px;height:2px;background:#cdd1d4"></div>
<div class="r" style="left:1525px;top:1262px;width:158px;height:46px;border:1px solid #c6cacd;background:#dde0e2"></div>
<svg width="2150" height="2078" viewBox="0 0 2150 2078" style="z-index:3">
<path d="M1677.2 966 L1693.8 982.2 M1693.8 966 L1677.2 982.2" stroke="#0d0d0d" stroke-width="4.5"/>
</svg>
<div style="position:absolute;left:0;top:0;z-index:4"><div class="t" style="left:981.60px;top:966.08px;font-size:24px;line-height:24px;color:#111;letter-spacing:0.118px;">Preparing information...</div>
<div class="t" style="left:593.20px;top:1047.58px;font-size:24px;line-height:24px;color:#111;letter-spacing:-0.073px;">From:</div>
<div class="t" style="left:594.20px;top:1085.58px;font-size:24px;line-height:24px;color:#111;">To:</div>
<div class="t" style="left:596.30px;top:1179.08px;font-size:24px;line-height:24px;color:#111;letter-spacing:-0.357px;">Time elapsed:</div>
<div class="t" style="left:596.30px;top:1217.28px;font-size:24px;line-height:24px;color:#111;">Time remaining:</div>
<div class="t" style="left:867.80px;top:1179.08px;font-size:24px;line-height:24px;color:#111;letter-spacing:-1.496px;">00:00:00</div>
<div class="t" style="left:867.80px;top:1217.28px;font-size:24px;line-height:24px;color:#111;letter-spacing:-1.496px;">00:00:00</div>
<div class="t" style="left:1141.00px;top:1179.08px;font-size:24px;line-height:24px;color:#111;letter-spacing:-0.668px;">Transferred:</div>
<div class="t" style="left:1141.00px;top:1217.28px;font-size:24px;line-height:24px;color:#111;letter-spacing:-0.730px;">Transfer rate:</div>
<div class="t" style="left:1411.00px;top:1179.08px;font-size:24px;line-height:24px;color:#111;letter-spacing:-1.758px;">0.0 B</div>
<div class="t" style="left:1411.00px;top:1217.28px;font-size:24px;line-height:24px;color:#111;letter-spacing:-1.048px;">0 B/s</div>
<div class="t" style="left:1569.40px;top:1273.58px;font-size:24px;line-height:24px;color:#7a8188;letter-spacing:-0.515px;">Cancel</div></div>
</body></html>
